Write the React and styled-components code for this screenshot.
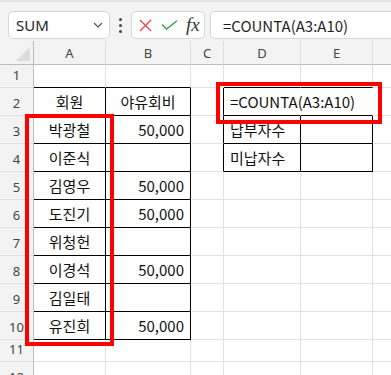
import React from 'react';
import styled, { createGlobalStyle } from 'styled-components';

const GlobalStyle = createGlobalStyle`
  html, body {
    margin: 0;
    padding: 0;
    background: #ffffff;
  }
  body {
    font-family: "Noto Sans CJK KR", "Noto Sans", sans-serif;
    overflow: hidden;
  }
`;

const COLS = ['A', 'B', 'C', 'D', 'E', 'F'];
const COL_WIDTHS = [34, 72, 85, 33, 77, 72, 80];
const ROW_HEIGHTS = [23, 28, 28, 28, 28, 28, 28, 28, 28, 28, 22, 28];

const names = ['박광철', '이준식', '김영우', '도진기', '위청헌', '이경석', '김일태', '유진희'];
const fees = ['50,000', '', '50,000', '50,000', '', '50,000', '', '50,000'];

// cell content by "row-col" key
const cells = {
  '2-A': { text: '회원', align: 'center' },
  '2-B': { text: '야유회비', align: 'center' },
  '2-D': { text: '=COUNTA(A3:A10)', align: 'left', overflow: true },
  '3-D': { text: '납부자수', align: 'left' },
  '4-D': { text: '미납자수', align: 'left' },
};
names.forEach((n, i) => {
  cells[`${i + 3}-A`] = { text: n, align: 'center' };
  cells[`${i + 3}-B`] = { text: fees[i], align: 'right' };
});

const colIdx = (c) => COLS.indexOf(c);
const inRange = (r, c, r1, r2, c1, c2) =>
  r >= r1 && r <= r2 && colIdx(c) >= colIdx(c1) && colIdx(c) <= colIdx(c2);

// which of a cell's own edges (right / bottom) are drawn black
const darkRight = (r, c) => {
  if (inRange(r, c, 2, 10, 'A', 'B')) return true;
  if (r >= 2 && r <= 4 && c === 'C') return true;
  if (inRange(r, c, 3, 4, 'D', 'E')) return true;
  return false;
};

const darkBottom = (r, c) => {
  if (inRange(r, c, 1, 10, 'A', 'B')) return true;
  if (inRange(r, c, 1, 4, 'D', 'E')) return true;
  return false;
};

const hiddenRight = (r, c) => r === 2 && (c === 'D' || c === 'E');

const Window = styled.div`
  position: relative;
  width: 391px;
  height: 375px;
  overflow: hidden;
  background: #f3f3f3;
`;

const TopStrip = styled.div`
  height: 2px;
  background: #e6e6e6;
`;

const FormulaBar = styled.div`
  display: flex;
  align-items: center;
  height: 39px;
  padding: 7px 0 0 8px;
  box-sizing: border-box;
`;

const Box = styled.div`
  display: flex;
  align-items: center;
  box-sizing: border-box;
  height: 28px;
  background: #ffffff;
  border: 1px solid #d6d6d6;
  border-radius: 5px;
`;

const NameBox = styled(Box)`
  width: 102px;
  padding: 0 6px 0 7px;
  justify-content: space-between;
  font-family: "Noto Sans", sans-serif;
  font-size: 15px;
  color: #1f1f1f;
`;

const Dots = styled.div`
  display: flex;
  flex-direction: column;
  gap: 3px;
  width: 21px;
  align-items: center;
  span {
    width: 3px;
    height: 3px;
    border-radius: 50%;
    background: #444;
  }
`;

const IconBox = styled(Box)`
  width: 74px;
  padding: 0 4px 0 7px;
  gap: 9px;
`;

const Fx = styled.span`
  font-family: "Liberation Serif", "DejaVu Serif", serif;
  font-style: italic;
  font-size: 19px;
  color: #333;
  margin-left: -1px;
`;

const FormulaInput = styled(Box)`
  flex: 1;
  margin-left: 5px;
  padding-left: 12px;
  border-right: none;
  border-radius: 5px 0 0 5px;
  font-size: 15px;
  color: #1f1f1f;
`;

const Grid = styled.div`
  display: grid;
  grid-template-columns: ${COL_WIDTHS.map((w) => `${w}px`).join(' ')};
  grid-template-rows: 24px ${ROW_HEIGHTS.map((h) => `${h}px`).join(' ')};
`;

const Corner = styled.div`
  position: relative;
  background: #f3f3f3;
  border-right: 1px solid #bcbcbc;
  border-bottom: 1px solid #bcbcbc;
  &::after {
    content: '';
    position: absolute;
    right: 3px;
    bottom: 3px;
    border-left: 14px solid transparent;
    border-bottom: 14px solid #dcdcdc;
  }
`;

const ColHead = styled.div`
  display: flex;
  align-items: center;
  justify-content: center;
  background: #f3f3f3;
  border-right: 1px solid #dedede;
  border-bottom: 1px solid #bcbcbc;
  font-family: "Noto Sans", sans-serif;
  font-size: 13px;
  color: #444;
`;

const RowHead = styled.div`
  display: flex;
  align-items: flex-end;
  justify-content: center;
  padding-bottom: 3px;
  box-sizing: border-box;
  background: #f3f3f3;
  border-right: 1px solid #bcbcbc;
  border-bottom: 1px solid #dedede;
  font-family: "Noto Sans", sans-serif;
  font-size: 13px;
  color: #444;
`;

const Cell = styled.div`
  display: flex;
  align-items: flex-end;
  justify-content: ${(p) => (p.$align === 'right' ? 'flex-end' : p.$align === 'center' ? 'center' : 'flex-start')};
  padding: 0 ${(p) => (p.$align === 'right' ? '6px' : '0')} 2px ${(p) => (p.$align === 'left' ? '6px' : '0')};
  box-sizing: border-box;
  background: #ffffff;
  border-right: 1px solid ${(p) => (p.$hideRight ? '#ffffff' : p.$darkRight ? '#000' : '#e1e1e1')};
  border-bottom: 1px solid ${(p) => (p.$darkBottom ? '#000' : '#e1e1e1')};
  font-size: 15px;
  line-height: 22px;
  color: #111;
  white-space: nowrap;
  overflow: ${(p) => (p.$overflow ? 'visible' : 'hidden')};
  position: relative;
  z-index: ${(p) => (p.$overflow ? 1 : 0)};
`;

const Highlight = styled.div`
  position: absolute;
  box-sizing: border-box;
  border: 4px solid #ff0000;
  pointer-events: none;
  z-index: 2;
`;

const CloseIcon = () => (
  <svg width="13" height="13" viewBox="0 0 13 13">
    <path d="M1 1 L12 12 M12 1 L1 12" stroke="#e5484d" strokeWidth="1.4" fill="none" />
  </svg>
);

const CheckIcon = () => (
  <svg width="17" height="10" viewBox="0 0 17 10">
    <path d="M1 4.5 L5.5 9 L16 0.8" stroke="#3d9a50" strokeWidth="1.4" fill="none" />
  </svg>
);

const Chevron = () => (
  <svg width="10" height="6" viewBox="0 0 10 6">
    <path d="M1 1 L5 5 L9 1" stroke="#555" strokeWidth="1.2" fill="none" />
  </svg>
);

const App = () => {
  const rows = ROW_HEIGHTS.map((_, i) => i + 1);
  return (
    <Window>
      <GlobalStyle />
      <TopStrip />
      <FormulaBar>
        <NameBox>
          <span>SUM</span>
          <Chevron />
        </NameBox>
        <Dots>
          <span />
          <span />
          <span />
        </Dots>
        <IconBox>
          <CloseIcon />
          <CheckIcon />
          <Fx>fx</Fx>
        </IconBox>
        <FormulaInput>=COUNTA(A3:A10)</FormulaInput>
      </FormulaBar>
      <Grid>
        <Corner />
        {COLS.map((c) => (
          <ColHead key={c}>{c}</ColHead>
        ))}
        {rows.map((r) => (
          <React.Fragment key={r}>
            <RowHead>{r}</RowHead>
            {COLS.map((c) => {
              const cell = cells[`${r}-${c}`] || {};
              return (
                <Cell
                  key={c}
                  $align={cell.align}
                  $overflow={cell.overflow}
                  $darkRight={darkRight(r, c)}
                  $darkBottom={darkBottom(r, c)}
                  $hideRight={hiddenRight(r, c)}
                >
                  {cell.text}
                </Cell>
              );
            })}
          </React.Fragment>
        ))}
      </Grid>
      <Highlight style={{ left: 25, top: 114, width: 89, height: 232 }} />
      <Highlight style={{ left: 216, top: 82, width: 166, height: 42 }} />
    </Window>
  );
};

export default App;
